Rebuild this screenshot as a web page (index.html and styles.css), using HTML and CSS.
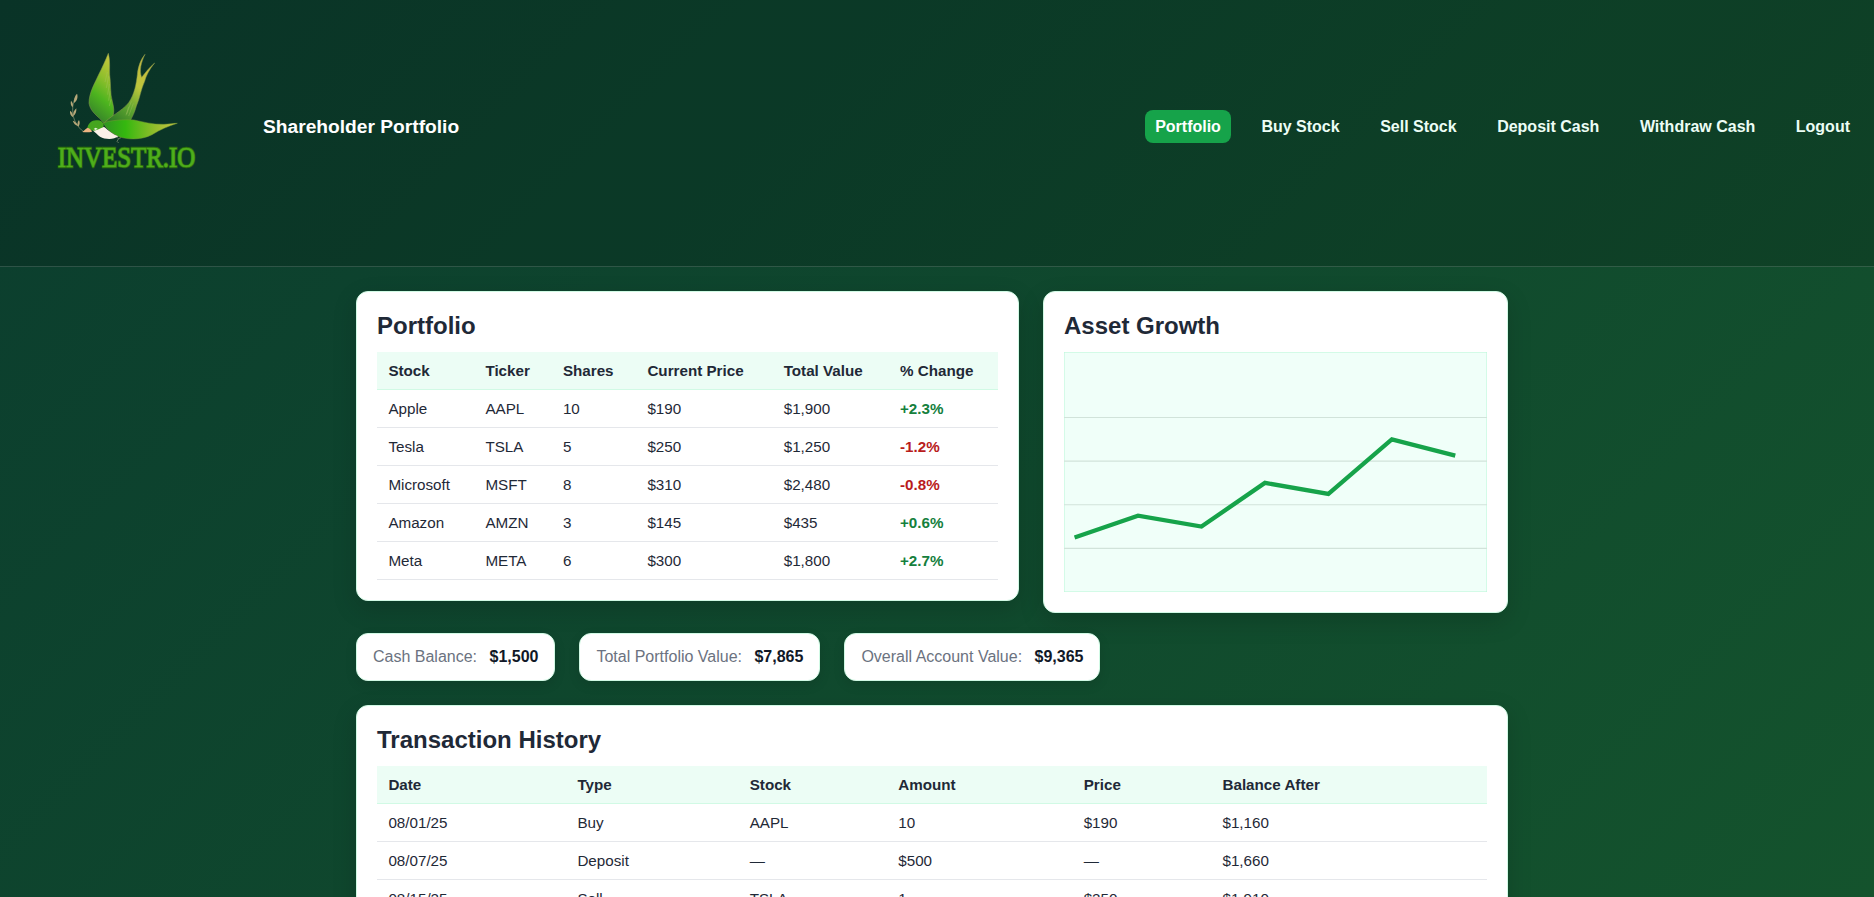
FILE: index.html
```html
<!DOCTYPE html>
<html lang="en">
<head>
<meta charset="utf-8">
<title>Shareholder Portfolio</title>
<link rel="stylesheet" href="styles.css">
</head>
<body>
<header class="site-header">
  <svg class="logo" viewBox="0 0 510 420" role="img" aria-label="Investr.io">
    <defs>
      <linearGradient id="wing" x1=".7" y1="0" x2=".4" y2="1">
        <stop offset="0" stop-color="#c9c83c"/><stop offset=".35" stop-color="#8fbf2c"/><stop offset=".65" stop-color="#4db41f"/><stop offset="1" stop-color="#35802a"/>
      </linearGradient>
      <linearGradient id="tail" x1=".8" y1="0" x2=".2" y2="1">
        <stop offset="0" stop-color="#c9b83c"/><stop offset=".4" stop-color="#bdc63c"/><stop offset=".7" stop-color="#5fa52f"/><stop offset="1" stop-color="#2f7a26"/>
      </linearGradient>
      <linearGradient id="side" x1="0" y1="0" x2="1" y2="0">
        <stop offset="0" stop-color="#2f9422"/><stop offset=".3" stop-color="#35b80f"/><stop offset=".7" stop-color="#93bd2c"/><stop offset="1" stop-color="#d0c545"/>
      </linearGradient>
    </defs>
    <g fill="none" stroke="#8e9a78" stroke-width="2">
      <path d="M132 276C112 262 98 238 98 212C97 196 102 178 110 164"/>
      <path d="M228 290l8 6-5 8 5 5M236 296l7-3"/>
    </g>
    <g fill="#b7a878">
      <path d="M111 161c4 10 0 22-9 28-1-10 2-20 9-28zM93 182c6 6 7 12 5 20-6-6-7-12-5-20zM109 205c1 10-2 18-9 24-2-10 2-18 9-24zM90 212c7 5 10 12 9 20-7-5-10-12-9-20zM117 240c4 8 2 15-2 20-4-7-3-14 2-20zM98 242c8 2 14 8 16 16-8-2-13-8-16-16z"/>
    </g>
    <path fill="url(#wing)" stroke="#8b9b4c" stroke-width="1.5" d="M205 40C211 62 208 84 209 104C213 132 210 160 217 184C222 204 223 216 219 228L192 249C174 228 151 216 147 190C147 160 162 134 175 106C186 84 197 60 205 40z"/>
    <path fill="url(#tail)" stroke="#8b9b4c" stroke-width="1.5" d="M315 43C303 68 297 92 305 112C316 98 328 82 344 69C328 88 318 108 314 124C302 150 300 174 289 198C283 220 277 230 270 243L192 251C204 232 246 214 266 188C284 162 289 130 292 104C294 80 302 58 315 43z"/>
    <path fill="url(#side)" stroke="#729b33" stroke-width="1.5" d="M190 249C215 240 250 238 282 240C310 246 340 254 372 253C388 252 400 250 412 250C386 258 362 268 336 284C306 300 264 299 240 291C218 282 200 268 190 249z"/>
    <path fill="#fbf1e8" d="M158 270C170 262 184 258 194 262C206 274 220 284 235 289C222 299 196 299 180 290C172 284 166 278 158 270z"/>
    <path fill="#45a51f" d="M142 265C144 248 158 238 174 241C188 242 194 252 190 262C182 264 174 271 162 272C154 271 148 267 142 265z"/>
    <path fill="#eeb582" d="M127 276C134 270 138 265 143 263C150 266 155 270 156 275C146 278 136 277 127 276z"/>
    <path fill="#e9f5dd" d="M161 267l6-4 6 3-6 4z"/>
    <g fill="none" stroke="#a9c566" stroke-width="1.5" opacity=".7">
      <path d="M202 96l-7 30M206 108l-7 36M208 132l-5 32M210 154l-4 28M213 178l-5 20M274 184l-14 38M280 190l-14 38M266 200l-8 26"/>
    </g>
    <text class="logo-text logo-edge" x="53" y="382" textLength="413" lengthAdjust="spacingAndGlyphs" aria-hidden="true">INVESTR.IO</text>
    <text class="logo-text" x="53" y="382" textLength="413" lengthAdjust="spacingAndGlyphs">INVESTR.IO</text>
  </svg>
  <h1 class="site-title">Shareholder Portfolio</h1>
  <nav class="site-nav">
    <a class="active">Portfolio</a>
    <a>Buy Stock</a>
    <a>Sell Stock</a>
    <a>Deposit Cash</a>
    <a>Withdraw Cash</a>
    <a>Logout</a>
  </nav>
</header>
<main class="content">
  <div class="top-row">
    <section class="card">
      <h2>Portfolio</h2>
      <table class="holdings">
        <colgroup><col class="h1c"><col class="h2c"><col class="h3c"><col class="h4c"><col class="h5c"><col></colgroup>
        <thead><tr><th>Stock</th><th>Ticker</th><th>Shares</th><th>Current Price</th><th>Total Value</th><th>% Change</th></tr></thead>
        <tbody>
          <tr><td>Apple</td><td>AAPL</td><td>10</td><td>$190</td><td>$1,900</td><td class="up">+2.3%</td></tr>
          <tr><td>Tesla</td><td>TSLA</td><td>5</td><td>$250</td><td>$1,250</td><td class="down">-1.2%</td></tr>
          <tr><td>Microsoft</td><td>MSFT</td><td>8</td><td>$310</td><td>$2,480</td><td class="down">-0.8%</td></tr>
          <tr><td>Amazon</td><td>AMZN</td><td>3</td><td>$145</td><td>$435</td><td class="up">+0.6%</td></tr>
          <tr><td>Meta</td><td>META</td><td>6</td><td>$300</td><td>$1,800</td><td class="up">+2.7%</td></tr>
        </tbody>
      </table>
    </section>
    <section class="card">
      <h2>Asset Growth</h2>
      <svg class="chart" viewBox="0 0 400 220" preserveAspectRatio="none">
        <rect width="400" height="220" fill="#f0fff9" stroke="#bbf7d9"/>
        <path d="M0 60H400M0 100H400M0 140H400M0 180H400" stroke="#d1e3da"/>
        <polyline points="10,170 70,150 130,160 190,120 250,130 310,80 370,95" fill="none" stroke="#16a34a" stroke-width="4"/>
      </svg>
    </section>
  </div>
  <div class="stats">
    <div class="stat">Cash Balance: <strong>$1,500</strong></div>
    <div class="stat">Total Portfolio Value: <strong>$7,865</strong></div>
    <div class="stat">Overall Account Value: <strong>$9,365</strong></div>
  </div>
  <section class="card">
    <h2>Transaction History</h2>
    <table class="history">
      <colgroup><col class="t1c"><col class="t2c"><col class="t3c"><col class="t4c"><col class="t5c"><col></colgroup>
      <thead><tr><th>Date</th><th>Type</th><th>Stock</th><th>Amount</th><th>Price</th><th>Balance After</th></tr></thead>
      <tbody>
        <tr><td>08/01/25</td><td>Buy</td><td>AAPL</td><td>10</td><td>$190</td><td>$1,160</td></tr>
        <tr><td>08/07/25</td><td>Deposit</td><td>—</td><td>$500</td><td>—</td><td>$1,660</td></tr>
        <tr><td>08/15/25</td><td>Sell</td><td>TSLA</td><td>1</td><td>$250</td><td>$1,910</td></tr>
      </tbody>
    </table>
  </section>
</main>
</body>
</html>
```
FILE: styles.css
```css
* { box-sizing: border-box; }
html { height: 100%; overflow: hidden; }
body {
  margin: 0;
  height: 100%;
  overflow: hidden;
  font-family: "Liberation Sans", Arial, sans-serif;
  color: #1f2937;
  background: linear-gradient(135deg, #0b3d2e, #14532d);
}
.site-header {
  display: flex;
  align-items: flex-start;
  height: 267px;
  padding: 40px 14px 0 40px;
  background: rgba(0, 0, 0, 0.15);
  border-bottom: 1px solid rgba(255, 255, 255, 0.15);
}
.logo { width: 170px; height: 140px; flex: none; overflow: visible; }
.logo-text {
  font-family: "Liberation Serif", serif;
  font-size: 88px;
  fill: #4fae1c;
  stroke: #4fae1c;
  stroke-width: 2px;
}
.logo-edge { stroke: #2a6b0c; stroke-width: 7px; }
.site-title {
  margin: 75.5px 0 0 53px;
  font-size: 19.2px;
  line-height: 22px;
  color: #fff;
}
.site-nav { display: flex; gap: 20.5px; margin: 70px 0 0 auto; }
.site-nav a {
  padding: 0 10px;
  border-radius: 8px;
  font-weight: 700;
  line-height: 33px;
  color: #ecfdf5;
}
.site-nav .active { background: #16a34a; color: #fff; }
.content { width: 1152px; margin: 24px 0 0 356px; }
.top-row {
  display: grid;
  grid-template-columns: 663px 465px;
  gap: 24px;
  align-items: start;
}
.card {
  padding: 20px;
  background: #fff;
  border: 1px solid #d1fae5;
  border-radius: 12px;
  box-shadow: 0 8px 24px rgba(0, 0, 0, 0.15);
}
.card h2 { margin: 0 0 12px; font-size: 24px; line-height: 28px; }
table { width: 100%; table-layout: fixed; border-collapse: separate; border-spacing: 0; font-size: 15.2px; }
th, td { height: 38px; padding: 10px 11.4px; text-align: left; line-height: 17px; white-space: nowrap; }
th { background: #ecfdf5; border-bottom: 1px solid #d1fae5; }
td { border-bottom: 1px solid #e5e7eb; }
.up, .down { font-weight: 700; }
.up { color: #15803d; }
.down { color: #b91c1c; }
.h1c { width: 97px; } .h2c { width: 77.5px; } .h3c { width: 84.5px; } .h4c { width: 136.3px; } .h5c { width: 116.3px; }
.t1c { width: 189px; } .t2c { width: 172.3px; } .t3c { width: 148.6px; } .t4c { width: 185.4px; } .t5c { width: 138.8px; }
.chart { display: block; width: 100%; height: 240px; }
.stats { display: flex; gap: 24px; margin: 20px 0 24px; }
.stat {
  padding: 14px 16px;
  line-height: 18px;
  color: #6b7280;
  background: #fff;
  border: 1px solid #d1fae5;
  border-radius: 12px;
  box-shadow: 0 4px 12px rgba(0, 0, 0, 0.1);
}
.stat strong { margin-left: 8px; color: #111827; }
```
